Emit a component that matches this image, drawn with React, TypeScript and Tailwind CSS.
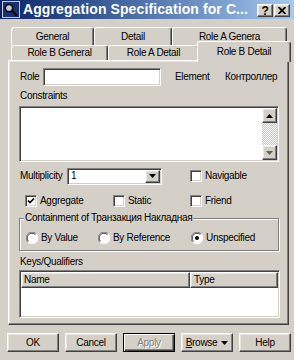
import React from "react";

const raised =
  "border border-t-white border-l-white border-r-[#404040] border-b-[#404040] shadow-[inset_-1px_-1px_0_#808080,inset_1px_1px_0_#e8e6e0]";
const sunken =
  "border border-t-[#808080] border-l-[#808080] border-r-white border-b-white shadow-[inset_1px_1px_0_#404040,inset_-1px_-1px_0_#d4d0c8]";
const tabCls =
  "flex justify-center whitespace-nowrap overflow-hidden bg-[#d4d0c8] border-t border-l border-r border-t-white border-l-white border-r-[#404040] rounded-t-[3px] shadow-[inset_-1px_0_0_#808080] leading-[12px]";

function Check({ checked }: { checked?: boolean }) {
  return (
    <span className={`w-[12px] h-[12px] shrink-0 bg-white flex items-center justify-center ${sunken}`}>
      {checked && (
        <svg width="8" height="8" viewBox="0 0 8 8">
          <polyline points="1,3.5 3,5.6 7,1.5" fill="none" stroke="#000" strokeWidth="1.7" />
        </svg>
      )}
    </span>
  );
}

function Radio({ checked }: { checked?: boolean }) {
  return (
    <svg width="12" height="12" viewBox="0 0 12 12" className="shrink-0">
      <circle cx="6" cy="6" r="5.5" fill="#ffffff" />
      <path d="M1.8 10.2 A5.5 5.5 0 0 1 10.2 1.8" fill="none" stroke="#808080" strokeWidth="1" />
      <path d="M2.6 9.4 A4.4 4.4 0 0 1 9.4 2.6" fill="none" stroke="#404040" strokeWidth="1" />
      <path d="M10.2 1.8 A5.5 5.5 0 0 1 1.8 10.2" fill="none" stroke="#ffffff" strokeWidth="1" />
      {checked && <circle cx="6" cy="6" r="2" fill="#000" />}
    </svg>
  );
}

function Tri({ up, color = "#000" }: { up?: boolean; color?: string }) {
  return (
    <svg width="7" height="4" viewBox="0 0 7 4">
      {up ? <polygon points="0,4 7,4 3.5,0" fill={color} /> : <polygon points="0,0 7,0 3.5,4" fill={color} />}
    </svg>
  );
}

export default function App() {
  return (
    <div className="w-[294px] h-[360px] overflow-hidden bg-[#d4d0c8] text-black font-['Liberation_Sans',sans-serif] text-[10px] tracking-[-0.3px] leading-[12px]">
      {/* Title bar */}
      <div className="h-[19px] flex items-stretch bg-linear-to-r from-[#0a246a] to-[#a6caf0]">
        <span className="ml-[2px] mt-[1px] w-[18px] h-[17px] shrink-0">
          <svg width="18" height="17" viewBox="0 0 18 17">
            <rect x="0.5" y="0.5" width="17" height="16" fill="#1c2f6e" stroke="#c8c8d8" />
            <circle cx="7" cy="7" r="3.6" fill="#c8ccd8" stroke="#000" strokeWidth="1.5" />
            <line x1="9.8" y1="9.8" x2="15" y2="15" stroke="#000" strokeWidth="2.2" />
          </svg>
        </span>
        <span className="ml-[3px] flex-1 self-center whitespace-nowrap text-white font-bold text-[14px] tracking-[0.1px] leading-[17px]">
          Aggregation Specification for C...
        </span>
        <div className="flex gap-[1px] pt-[4px] pb-[2px] mr-[4px] ml-[1px]">
          <div className={`w-[16px] h-[13px] bg-[#d4d0c8] flex items-center justify-center font-bold text-[12px] leading-none ${raised}`}>?</div>
          <div className={`w-[16px] h-[13px] bg-[#d4d0c8] flex items-center justify-center ${raised}`}>
            <svg width="8" height="7" viewBox="0 0 8 7">
              <path d="M0.5 0 L7.5 7 M7.5 0 L0.5 7" stroke="#000" strokeWidth="1.8" />
            </svg>
          </div>
        </div>
      </div>

      {/* Tabs row 1 */}
      <div className="flex pl-[11px] h-[18px] mt-[8px]">
        <div className={`w-[83px] h-full pt-[3px] ${tabCls}`}>General</div>
        <div className={`w-[78px] h-full pt-[3px] ${tabCls}`}>Detail</div>
        <div className={`w-[115px] h-full pt-[3px] ${tabCls}`}>Role A Genera</div>
      </div>
      {/* Tabs row 2 */}
      <div className="relative z-10 flex items-end pl-[11px] h-[19px] -mt-[4px]">
        <div className={`w-[97px] h-[15px] pt-[1px] ${tabCls}`}>Role B General</div>
        <div className={`w-[91px] h-[15px] pt-[1px] ${tabCls}`}>Role A Detail</div>
        <div className={`w-[94px] h-[21px] -ml-[2px] -mb-[2px] pt-[4px] ${tabCls}`}>Role B Detail</div>
      </div>

      {/* Panel */}
      <div className={`ml-[8px] w-[281px] h-[265px] pl-[10px] pt-[7px] flex flex-col ${raised}`}>
        <div className="flex items-center h-[18px]">
          <span className="w-[24px] pl-[1px]">Role</span>
          <div className={`w-[118px] h-[18px] bg-white ${sunken}`} />
          <span className="ml-[14px] w-[50px]">Element</span>
          <span>Контроллер</span>
        </div>

        <div className="mt-[4px] pl-[1px]">Constraints</div>
        <div className={`mt-[4px] w-[260px] h-[56px] bg-white p-[1px] flex justify-end ${sunken}`}>
          <div className="w-[15px] h-full flex flex-col">
            <div className={`h-[15px] bg-[#d4d0c8] flex items-center justify-center ${raised}`}>
              <Tri up />
            </div>
            <div className="flex-1 bg-[repeating-conic-gradient(#ffffff_0%_25%,#c8c4bc_0%_50%)] bg-[length:2px_2px]" />
            <div className={`h-[15px] bg-[#d4d0c8] flex items-center justify-center ${raised}`}>
              <Tri color="#606060" />
            </div>
          </div>
        </div>

        <div className="mt-[6px] h-[16px] flex items-center">
          <span className="w-[48px] pl-[1px] whitespace-nowrap">Multiplicity</span>
          <div className={`w-[95px] h-[17px] bg-white flex items-center p-[1px] ${sunken}`}>
            <span className="flex-1 pl-[2px]">1</span>
            <div className={`w-[15px] h-full bg-[#d4d0c8] flex items-center justify-center ${raised}`}>
              <Tri />
            </div>
          </div>
          <div className="ml-[28px] flex items-center gap-[3px]">
            <Check />
            <span>Navigable</span>
          </div>
        </div>

        <div className="mt-[11px] h-[12px] flex items-center pl-[6px]">
          <div className="w-[88px] flex items-center gap-[3px]">
            <Check checked />
            <span>Aggregate</span>
          </div>
          <div className="w-[77px] flex items-center gap-[3px]">
            <Check />
            <span>Static</span>
          </div>
          <div className="flex items-center gap-[3px]">
            <Check />
            <span>Friend</span>
          </div>
        </div>

        <fieldset className="mt-[5px] w-[260px] border border-[#808080] shadow-[1px_1px_0_#ffffff,inset_1px_1px_0_#ffffff]">
          <legend className="ml-[4px] px-[1px] leading-[12px] bg-[#d4d0c8] whitespace-nowrap">
            Containment of Транзакция Накладная
          </legend>
          <div className="pt-[8px] pb-[6px] flex items-center pl-[6px] h-[12px] box-content">
            <div className="w-[72px] flex items-center gap-[3px]">
              <Radio />
              <span>By Value</span>
            </div>
            <div className="w-[93px] flex items-center gap-[3px]">
              <Radio />
              <span>By Reference</span>
            </div>
            <div className="flex items-center gap-[3px]">
              <Radio checked />
              <span>Unspecified</span>
            </div>
          </div>
        </fieldset>

        <div className="mt-[5px] pl-[1px]">Keys/Qualifiers</div>
        <div className={`mt-[2px] w-[261px] h-[48px] bg-white p-[1px] ${sunken}`}>
          <div className="flex h-[16px]">
            <div className={`w-[169px] bg-[#d4d0c8] pl-[2px] flex items-center ${raised}`}>Name</div>
            <div className={`flex-1 bg-[#d4d0c8] pl-[3px] flex items-center ${raised}`}>Type</div>
          </div>
        </div>
      </div>

      {/* Buttons */}
      <div className="mt-[8px] pl-[7px] flex gap-[6px]">
        <div className={`w-[52px] h-[19px] flex items-center justify-center ${raised}`}>OK</div>
        <div className={`w-[52px] h-[19px] flex items-center justify-center ${raised}`}>Cancel</div>
        <div className="w-[52px] h-[19px] flex items-center justify-center border border-black shadow-[inset_1px_1px_0_#ffffff,inset_-1px_-1px_0_#404040,inset_-2px_-2px_0_#808080] text-[#808080] [text-shadow:1px_1px_0_#ffffff]">
          Apply
        </div>
        <div className={`w-[52px] h-[19px] flex items-center justify-center gap-[4px] ${raised}`}>
          <span>
            <span className="underline">B</span>rowse
          </span>
          <Tri />
        </div>
        <div className={`w-[52px] h-[19px] flex items-center justify-center ${raised}`}>Help</div>
      </div>
    </div>
  );
}
